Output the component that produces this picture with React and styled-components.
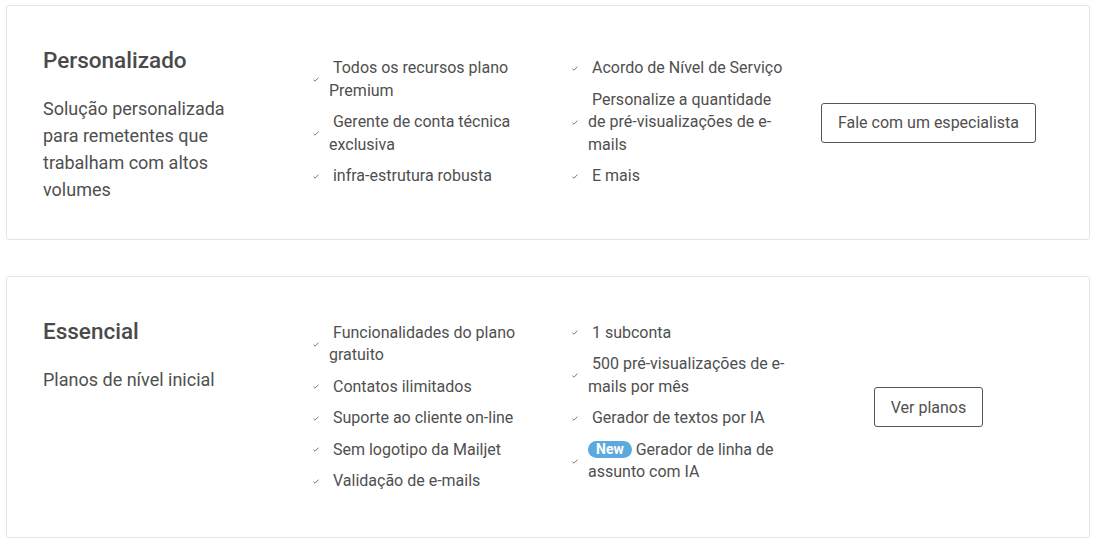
import styled, { createGlobalStyle } from 'styled-components'

const GlobalStyle = createGlobalStyle`
  html, body {
    margin: 0;
    padding: 0;
    background: #ffffff;
  }
  body {
    font-family: Roboto, "Noto Sans", Arial, sans-serif;
    color: #4f4f4f;
  }
`

const Page = styled.div`
  display: flex;
  flex-direction: column;
  gap: 36px;
  padding: 5px 7px 0 6px;
`

const Card = styled.section`
  display: grid;
  grid-template-columns: 270px 489px 1fr;
  align-items: center;
  border: 1px solid #e4e4e4;
  border-radius: 3px;
  padding: 35px 34px 35px 36px;
`

const Intro = styled.div`
  align-self: start;
  display: flex;
  flex-direction: column;
`

const Title = styled.h2`
  margin: 1px 0 0;
  font-size: 22.5px;
  line-height: 36px;
  font-weight: 500;
  color: #4a4a4a;
`

const Description = styled.p`
  margin: 17px 0 1px;
  font-size: 18px;
  line-height: 27px;
  color: #4f4f4f;
  width: 200px;
`

const Features = styled.div`
  display: grid;
  grid-template-columns: 259px 230px;
  align-items: start;
`

const List = styled.ul`
  list-style: none;
  margin: 0;
  padding: 5px 0;
  width: 216px;
`

const Item = styled.li`
  display: flex;
  align-items: center;
  gap: 10px;
  padding: 4.5px 0;
  font-size: 16px;
  line-height: 22.5px;
  color: #4f4f4f;
`

const Check = styled.svg`
  flex: none;
  width: 6px;
  height: 5px;
`

const Text = styled.span`
  flex: 1;
`

const Badge = styled.span`
  display: inline-block;
  background: #5aa9df;
  color: #ffffff;
  font-weight: 700;
  font-size: 14px;
  line-height: 17px;
  padding: 0 8px;
  border-radius: 9px;
  vertical-align: 1px;
`

const Action = styled.div`
  display: flex;
  justify-content: center;
`

const Button = styled.button`
  font-family: Roboto, "Noto Sans", Arial, sans-serif;
  font-size: 16px;
  color: #4f4f4f;
  background: #ffffff;
  border: 1px solid #555555;
  border-radius: 3px;
  height: 40px;
  padding: 0 16px;
  cursor: pointer;
`

const CheckIcon = () => (
  <Check viewBox="0 0 6 5">
    <polyline points="0.5,2.8 2,4.2 5.5,0.6" fill="none" stroke="#6a6a6a" strokeWidth="0.9" />
  </Check>
)

const Feature = ({ children, badge }) => (
  <Item>
    <CheckIcon />
    <Text>
      {badge ? <Badge>{badge}</Badge> : null}
      {badge ? ' ' : '\u00a0'}
      {children}
    </Text>
  </Item>
)

const plans = [
  {
    title: 'Personalizado',
    description: 'Solução personalizada para remetentes que trabalham com altos volumes',
    left: ['Todos os recursos plano Premium', 'Gerente de conta técnica exclusiva', 'infra-estrutura robusta'],
    right: [
      { text: 'Acordo de Nível de Serviço' },
      { text: 'Personalize a quantidade de pré-visualizações de e-mails' },
      { text: 'E mais' },
    ],
    action: 'Fale com um especialista',
  },
  {
    title: 'Essencial',
    description: 'Planos de nível inicial',
    left: [
      'Funcionalidades do plano gratuito',
      'Contatos ilimitados',
      'Suporte ao cliente on-line',
      'Sem logotipo da Mailjet',
      'Validação de e-mails',
    ],
    right: [
      { text: '1 subconta' },
      { text: '500 pré-visualizações de e-mails por mês' },
      { text: 'Gerador de textos por IA' },
      { text: 'Gerador de linha de assunto com IA', badge: 'New' },
    ],
    action: 'Ver planos',
  },
]

export default function App() {
  return (
    <>
      <GlobalStyle />
      <Page>
        {plans.map((plan) => (
          <Card key={plan.title}>
            <Intro>
              <Title>{plan.title}</Title>
              <Description>{plan.description}</Description>
            </Intro>
            <Features>
              <List>
                {plan.left.map((f) => (
                  <Feature key={f}>{f}</Feature>
                ))}
              </List>
              <List>
                {plan.right.map((f) => (
                  <Feature key={f.text} badge={f.badge}>
                    {f.text}
                  </Feature>
                ))}
              </List>
            </Features>
            <Action>
              <Button>{plan.action}</Button>
            </Action>
          </Card>
        ))}
      </Page>
    </>
  )
}
